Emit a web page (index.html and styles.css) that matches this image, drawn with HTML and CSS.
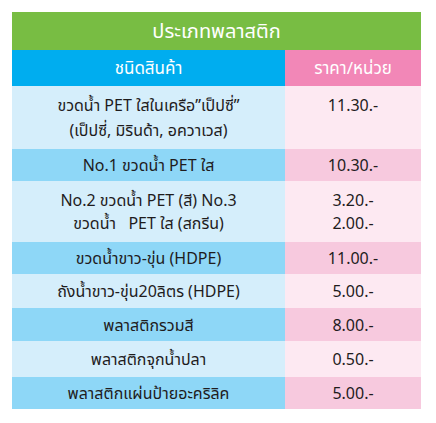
FILE: index.html
```html
<!DOCTYPE html>
<html lang="th">
<head>
<meta charset="utf-8">
<title>ประเภทพลาสติก</title>
<link rel="stylesheet" href="styles.css">
</head>
<body>
<table class="price-table">
  <colgroup><col class="c-name"><col class="c-price"></colgroup>
  <tr class="title-row"><th colspan="2" class="title">ประเภทพลาสติก</th></tr>
  <tr class="head-row"><th class="h-name">ชนิดสินค้า</th><th class="h-price">ราคา/หน่วย</th></tr>
  <tr class="row r1 light"><td class="name two">ขวดน้ำ PET ใสในเครือ”เป็ปซี่”<br>(เป็ปซี่, มิรินด้า, อควาเวส)</td><td class="price two">11.30.-<br>&nbsp;</td></tr>
  <tr class="row r2 mid"><td class="name">No.1 ขวดน้ำ PET ใส</td><td class="price">10.30.-</td></tr>
  <tr class="row r3 light"><td class="name two3">No.2 ขวดน้ำ PET (สี) No.3<br>ขวดน้ำ &nbsp;&nbsp;PET ใส (สกรีน)</td><td class="price two3">3.20.-<br>2.00.-</td></tr>
  <tr class="row r4 mid"><td class="name">ขวดน้ำขาว-ขุ่น (HDPE)</td><td class="price">11.00.-</td></tr>
  <tr class="row r5 light"><td class="name">ถังน้ำขาว-ขุ่น20ลิตร (HDPE)</td><td class="price">5.00.-</td></tr>
  <tr class="row r6 mid"><td class="name">พลาสติกรวมสี</td><td class="price">8.00.-</td></tr>
  <tr class="row r7 light"><td class="name">พลาสติกจุกน้ำปลา</td><td class="price">0.50.-</td></tr>
  <tr class="row r8 mid"><td class="name">พลาสติกแผ่นป้ายอะคริลิค</td><td class="price">5.00.-</td></tr>
</table>
</body>
</html>
```
FILE: styles.css
```css
html, body {
  margin: 0;
  padding: 0;
  background: #ffffff;
}
body {
  padding: 12px 15px 0 12px;
  font-family: Tahoma, "Noto Sans", "Noto Sans Thai", "DejaVu Sans", sans-serif;
  color: #1f1c1d;
}
.price-table {
  width: 409px;
  border-collapse: collapse;
  border-spacing: 0;
  table-layout: fixed;
}
.c-name { width: 273px; }
.c-price { width: 136px; }
.price-table th,
.price-table td {
  padding: 0;
  text-align: center;
  vertical-align: middle;
  font-size: 16px;
  line-height: 24px;
}
.title-row { height: 38px; }
.price-table .title {
  background: #78bd43;
  color: #ffffff;
  font-size: 20px;
  font-weight: normal;
  line-height: 30px;
}
.head-row { height: 36px; }
.price-table .h-name,
.price-table .h-price {
  color: #ffffff;
  font-size: 17px;
  font-weight: normal;
}
.h-name { background: #00adef; }
.h-price { background: #f287b7; }
.light .name { background: #d5eefb; }
.light .price { background: #fde9f2; }
.mid .name { background: #8ed7f7; }
.mid .price { background: #f7c9de; }
.price-table .two { line-height: 25px; }
.price-table .two3 { line-height: 23px; }
.r1 { height: 63px; }
.r2 { height: 32px; }
.r3 { height: 61px; }
.r4 { height: 32px; }
.r5 { height: 34px; }
.r6 { height: 33px; }
.r7 { height: 36px; }
.r8 { height: 32px; }
```
